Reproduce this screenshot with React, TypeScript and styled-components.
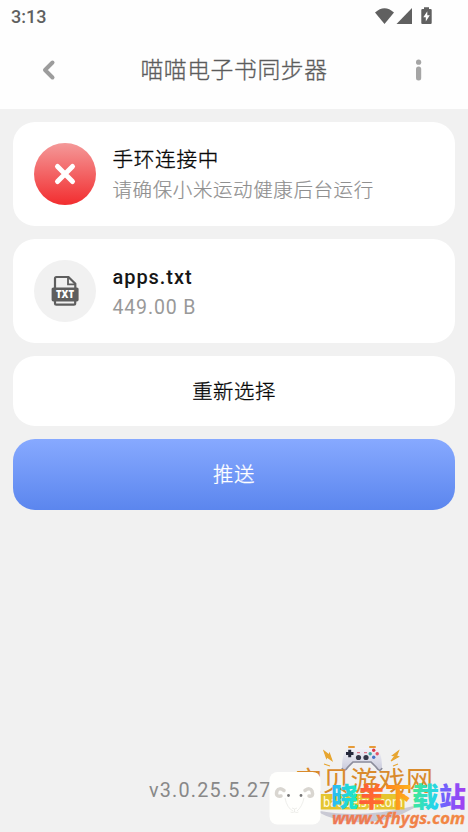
import React from "react";
import styled, { createGlobalStyle } from "styled-components";

const GlobalStyle = createGlobalStyle`
  * { box-sizing: border-box; }
  body { margin: 0; background: #f1f1f1; }
  svg { display: block; }
`;

const Screen = styled.main`
  position: relative;
  display: flex;
  flex-direction: column;
  width: 468px;
  height: 832px;
  overflow: hidden;
  background: #f1f1f1;
  font-family: Roboto, "Noto Sans CJK SC", sans-serif;
`;

const Header = styled.header`
  height: 109px;
  background: #fefefe;
`;

const StatusBar = styled.div`
  display: flex;
  align-items: center;
  justify-content: space-between;
  height: 32px;
  padding: 0 34px 0 11px;
  color: #606060;
`;

const Clock = styled.span`
  font-size: 18px;
  font-weight: 500;
  letter-spacing: 0;
`;

const TitleBar = styled.div`
  display: grid;
  grid-template-columns: 98px 1fr 98px;
  align-items: center;
  justify-items: center;
  height: 76px;
`;

const Title = styled.h1`
  margin: 0;
  padding-top: 2px;
  color: #5c5c5c;
  font-size: 22.8px;
  font-weight: 300;
  line-height: 32px;
  letter-spacing: 0.6px;
  white-space: nowrap;
  -webkit-text-stroke: 0.3px currentColor;
`;

const IconButton = styled.button`
  display: grid;
  place-items: center;
  padding: 0;
  border: 0;
  background: none;
`;

const Content = styled.section`
  display: flex;
  flex-direction: column;
  gap: 13px;
  padding: 13px;
`;

const Card = styled.article`
  display: flex;
  align-items: center;
  gap: 16.5px;
  height: 104px;
  padding-left: 21px;
  border-radius: 22px;
  background: #fff;
`;

const Badge = styled.div<{ $alert?: boolean }>`
  display: grid;
  place-items: center;
  width: 62px;
  height: 62px;
  border-radius: 50%;
  background: ${({ $alert }) => ($alert ? "linear-gradient(#f49999, #f22d2f)" : "#f1f1f1")};
`;

const Lines = styled.div`
  display: flex;
  flex-direction: column;
  gap: 1px;
  padding-top: 2px;
`;

const Primary = styled.div`
  color: #161616;
  font-size: 20px;
  font-weight: 500;
  line-height: 30px;
  letter-spacing: 0.95px;
  white-space: nowrap;
`;

const PrimaryHan = styled(Primary)`
  color: #080808;
  font-size: 20.6px;
  font-weight: 300;
  letter-spacing: 0.7px;
  -webkit-text-stroke: 0.35px currentColor;
`;

const Secondary = styled.div<{ $han?: boolean }>`
  color: ${({ $han }) => ($han ? "#8f8f8f" : "#999")};
  font-size: 19.5px;
  font-weight: ${({ $han }) => ($han ? 300 : 400)};
  line-height: 30px;
  letter-spacing: ${({ $han }) => ($han ? "0.6px" : "0.85px")};
  white-space: nowrap;
  -webkit-text-stroke: ${({ $han }) => ($han ? "0.2px currentColor" : "0")};
`;

const Action = styled.button<{ $primary?: boolean }>`
  height: 70.4px;
  padding: 1.5px 0 0;
  border: 0;
  border-radius: 22px;
  background: ${({ $primary }) => ($primary ? "linear-gradient(#87a9ff, #5b86ee)" : "#fff")};
  color: ${({ $primary }) => ($primary ? "#fff" : "#080808")};
  font: 300 20.4px/30px Roboto, "Noto Sans CJK SC", sans-serif;
  letter-spacing: 0.5px;
  -webkit-text-stroke: 0.3px currentColor;
`;

const Version = styled.footer`
  margin: auto 0 29px 149px;
  color: #888;
  font-size: 19.8px;
  line-height: 24px;
  letter-spacing: 1.2px;
`;

const Watermark = styled.svg`
  position: absolute;
  right: 0;
  bottom: 0;
`;

const StatusIcons = () => (
  <svg width="60" height="20" viewBox="374 5 60 20" fill="#606060">
    <path d="M375 11.5Q384.5 3 394 11.5L384.5 23Z" />
    <path d="M412 7V23H396.5Z" />
    <path d="M424 6.2h5v1.7h1.6q1.1 0 1.1 1.1v12.9q0 1.1-1.1 1.1h-8.2q-1.1 0-1.1-1.1V9q0-1.1 1.1-1.1h1.6z" />
    <path fill="#fff" d="M427.3 10.2l-4 6h2.5v4.3l4-6.2h-2.5z" />
  </svg>
);

const BackIcon = () => (
  <svg width="16" height="24" viewBox="0 0 16 24" fill="none" stroke="#9c9c9c" strokeWidth="4" strokeLinecap="round" strokeLinejoin="round">
    <path d="M11.5 4.5L4 12l7.5 7.5" />
  </svg>
);

const InfoIcon = () => (
  <svg width="8" height="24" viewBox="0 0 8 24" fill="#a5a5a5">
    <circle cx="3.6" cy="4.2" r="2.6" />
    <rect x="1" y="8.5" width="5.2" height="14" rx="2.5" />
  </svg>
);

const CrossIcon = () => (
  <svg width="24" height="24" viewBox="0 0 24 24" stroke="#fff" strokeWidth="5" strokeLinecap="round">
    <path d="M4.5 4.5l15 15M19.5 4.5L4.5 19.5" />
  </svg>
);

const FileIcon = () => (
  <svg width="28" height="32" viewBox="0 0 28 32">
    <path d="M4 13V3.4q0-1.4 1.4-1.4H17.5l6.8 6.6V13M4 24v4.2q0 1.4 1.4 1.4h17.4q1.4 0 1.4-1.4V24" fill="none" stroke="#5e5e5e" strokeWidth="2.2" />
    <path d="M17 2v7.4h7" fill="none" stroke="#5e5e5e" strokeWidth="1.8" />
    <rect x=".6" y="12.4" width="27" height="14" rx="1.7" fill="#5e5e5e" />
    <text x="14" y="23.2" fill="#fff" fontFamily="Open Sans" fontWeight="800" fontSize="10.5" textAnchor="middle" textLength="18" lengthAdjust="spacingAndGlyphs">TXT</text>
  </svg>
);

const brandGlyphs = [
  { glyph: "晓", x: 331, fill: "url(#aqua)" },
  { glyph: "羊", x: 358, fill: "url(#flame)" },
  { glyph: "下", x: 385, fill: "url(#amber)" },
  { glyph: "载", x: 412, fill: "url(#mint)" },
  { glyph: "站", x: 439, fill: "url(#violet)" },
];

const SiteMarks = () => (
  <Watermark width="208" height="97" viewBox="260 735 208 97">
    <defs>
      <linearGradient id="aqua"><stop stopColor="#2fb5fa" /><stop offset="1" stopColor="#18edc2" /></linearGradient>
      <linearGradient id="flame"><stop stopColor="#ff583c" /><stop offset="1" stopColor="#ff7427" /></linearGradient>
      <linearGradient id="amber"><stop stopColor="#ff811e" /><stop offset="1" stopColor="#ffb51c" /></linearGradient>
      <linearGradient id="mint" x2="1" y2="0.3"><stop stopColor="#48ed81" /><stop offset="1" stopColor="#23d3ef" /></linearGradient>
      <linearGradient id="violet"><stop stopColor="#626bff" /><stop offset="1" stopColor="#a63df0" /></linearGradient>
      <linearGradient id="url"><stop stopColor="#ed7857" /><stop offset="1" stopColor="#f28840" /></linearGradient>
      <linearGradient id="pad" x2="0" y2="1"><stop stopColor="#f2f2f8" /><stop offset="1" stopColor="#c8c9da" /></linearGradient>
    </defs>

    <path d="M320 812Q362 820 414 807Q385 824 354 821Q332 819 320 812Z" fill="#c9c9d4" stroke="#c9c9d4" strokeWidth="2" />
    <path d="M342 768Q342 748 351 748h22Q382 748 382 768Q380 774 377 768L371 762.5H353L347 768Q343 774 342 768Z" fill="url(#pad)" />
    <path d="M342 768Q344 773 348 767L353 762H371L376 767Q380 773 382 768" fill="none" stroke="#8c8d9c" strokeWidth="1.7" />
    <g fill="#e69b38"><rect x="348" y="746" width="7" height="2" rx="1" /><rect x="369" y="746" width="7" height="2" rx="1" /></g>
    <path d="M346 753.5h7.5M349.7 749.7v7.6" stroke="#25283b" strokeWidth="3" />
    <circle cx="358.5" cy="757.5" r="2.6" fill="#343647" /><circle cx="366" cy="757.5" r="2.6" fill="#343647" />
    <path d="M357 752.7h3M364 752.7h3" stroke="#d65e73" />
    <circle cx="373.7" cy="750.3" r="1.7" fill="#db3c4c" /><circle cx="373.7" cy="757.3" r="1.7" fill="#4773c8" />
    <circle cx="370.2" cy="753.8" r="1.7" fill="#42a8a3" /><circle cx="377.2" cy="753.8" r="1.7" fill="#e35467" />
    <path d="M324 751l5 4 .5-1.5 2.5 7-5-3.5-.5 1.2zM398.5 751l-6 4.5 2.5.3-4 5.2 7.5-4.3-2-.6zM324 764l6 2M398 764l-5 2" fill="#e7a52f" stroke="#e7a52f" strokeWidth="1.1" />
    <text x="295" y="791" fill="#d98a2b" fontFamily="Noto Sans CJK SC" fontWeight="400" fontSize="27" textLength="138">宝贝游戏网</text>

    <rect x="320.5" y="794" width="84" height="15.5" fill="#e5c52e" />
    <text x="323" y="806.5" fill="#fff9d9" fontFamily="Noto Sans" fontWeight="500" fontSize="14.5" textLength="80" lengthAdjust="spacingAndGlyphs">baobeisyj.com</text>

    <rect x="269.5" y="772" width="51" height="52.5" rx="8" fill="#fffffd" />
    <g fill="none" stroke="#d9d6d0" strokeWidth="3.5" strokeLinecap="round">
      <path d="M284 790.5Q279 787 277 791Q275 797 281 796M305 790.5Q310 787 312 791Q314 797 309 796" />
    </g>
    <path d="M285 798Q287 808 293 811M304 798Q302 807 297 811M292 808q3 2 5 0M294.5 809v3q-3 1-4 0M294.5 812q3 1 4 0" fill="none" stroke="#e6e6e3" strokeWidth=".7" />
    <circle cx="288.5" cy="795.5" r="1.4" fill="#777" /><circle cx="301" cy="795.5" r="1.4" fill="#777" />

    <g fontFamily="Noto Sans CJK SC" fontWeight="900" fontSize="27">
      {brandGlyphs.map(({ glyph, x, fill }) => <text key={glyph} x={x} y="806.5" fill={fill}>{glyph}</text>)}
    </g>
    <text x="332" y="824" fill="url(#url)" stroke="url(#url)" strokeWidth=".3" fontFamily="Noto Sans" fontStyle="italic" fontWeight="700" fontSize="16.5" textLength="133" lengthAdjust="spacingAndGlyphs">www.xfhygs.com</text>
  </Watermark>
);

export default function App() {
  return (
    <Screen>
      <GlobalStyle />
      <Header>
        <StatusBar><Clock>3:13</Clock><StatusIcons /></StatusBar>
        <TitleBar>
          <IconButton aria-label="返回"><BackIcon /></IconButton>
          <Title>喵喵电子书同步器</Title>
          <IconButton aria-label="信息"><InfoIcon /></IconButton>
        </TitleBar>
      </Header>
      <Content>
        <Card>
          <Badge $alert><CrossIcon /></Badge>
          <Lines>
            <PrimaryHan>手环连接中</PrimaryHan>
            <Secondary $han>请确保小米运动健康后台运行</Secondary>
          </Lines>
        </Card>
        <Card>
          <Badge><FileIcon /></Badge>
          <Lines>
            <Primary>apps.txt</Primary>
            <Secondary>449.00 B</Secondary>
          </Lines>
        </Card>
        <Action>重新选择</Action>
        <Action $primary>推送</Action>
      </Content>
      <Version>v3.0.25.5.27</Version>
      <SiteMarks />
    </Screen>
  );
}
